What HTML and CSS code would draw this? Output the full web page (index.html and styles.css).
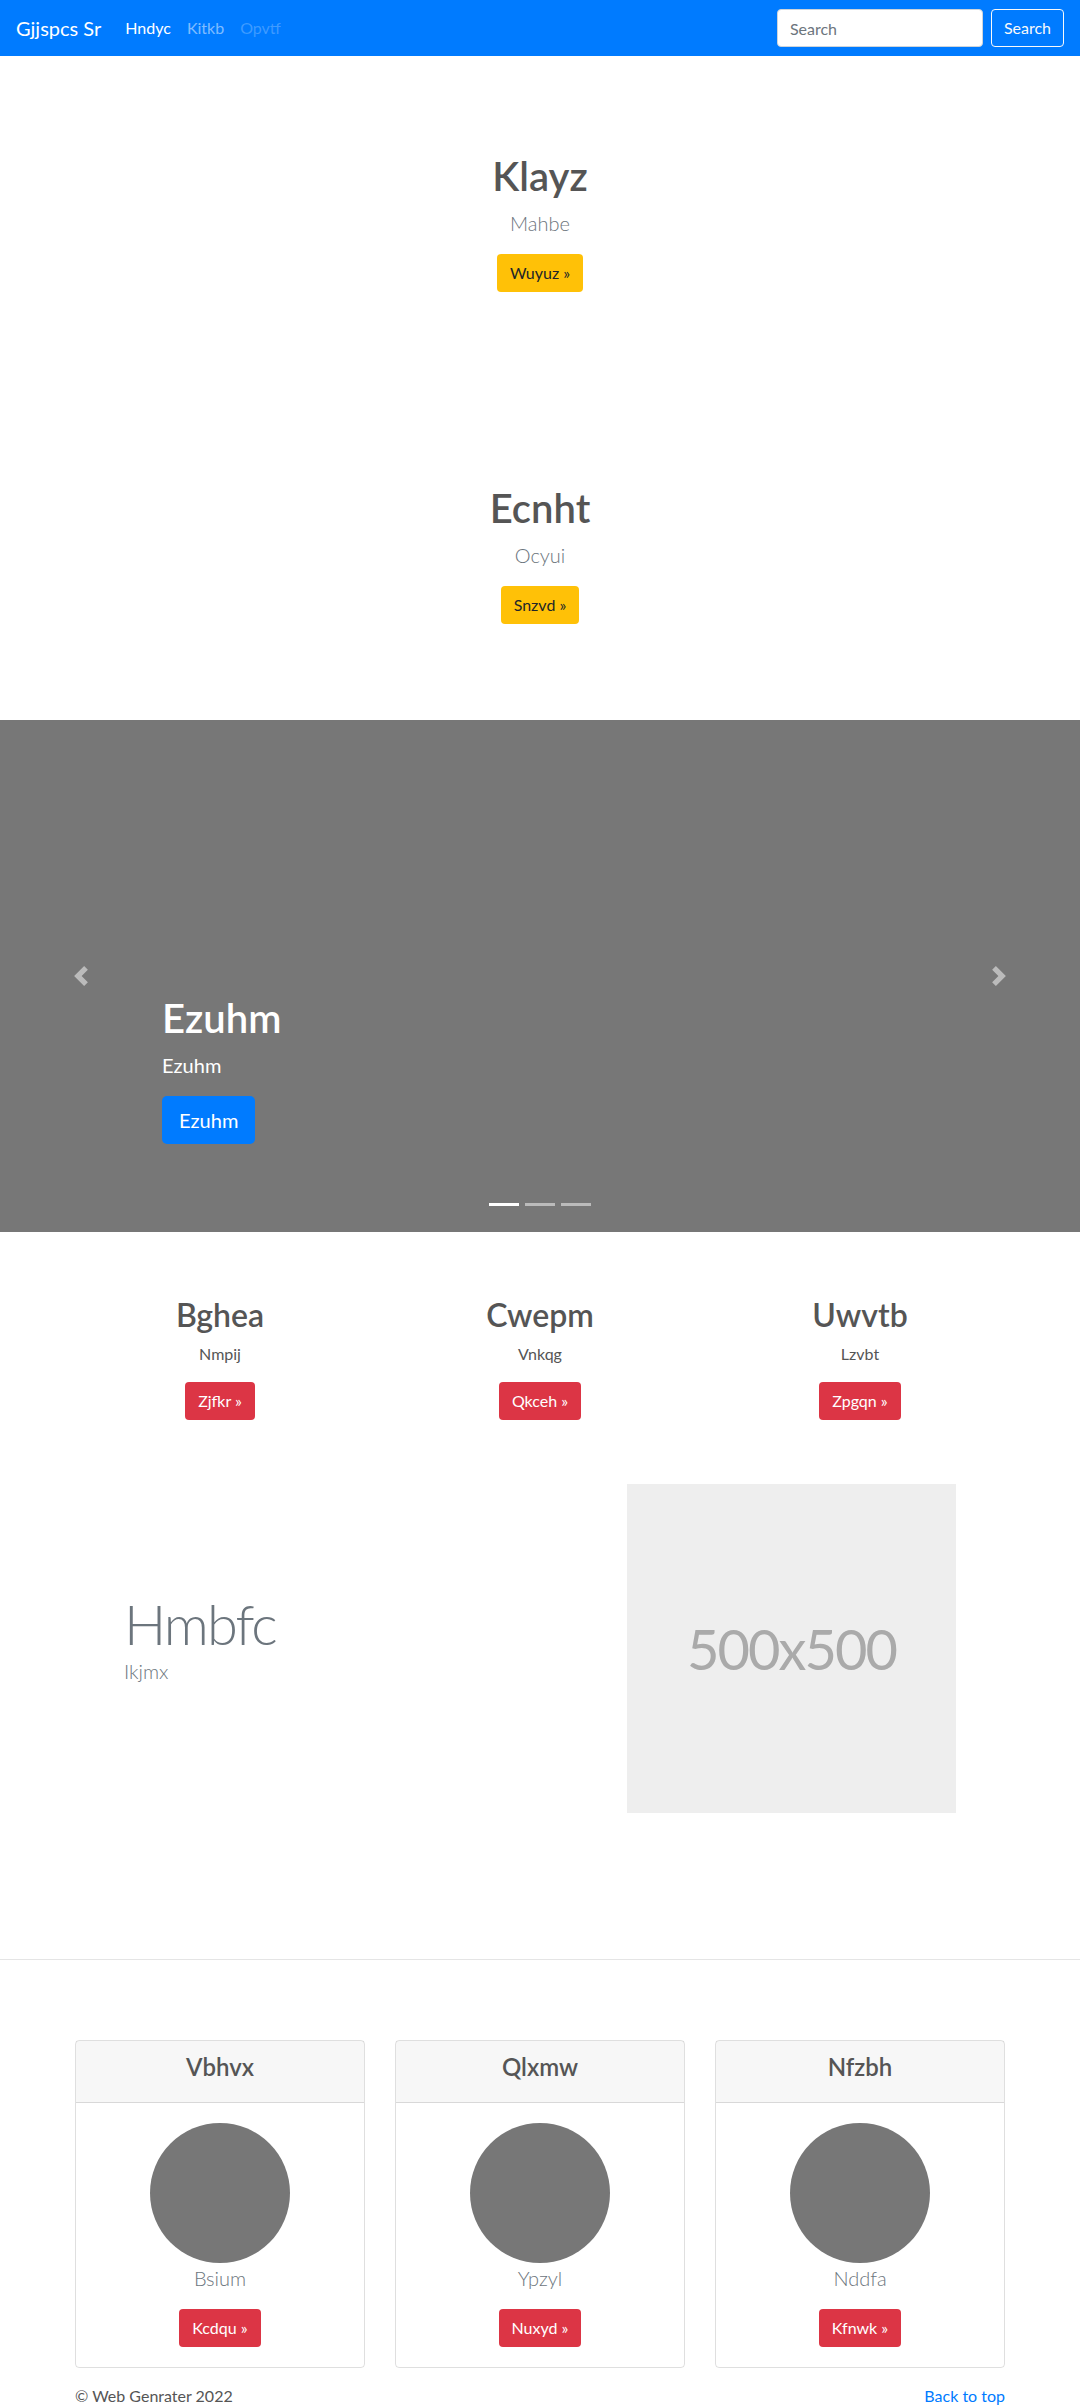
FILE: index.html
```html
<!DOCTYPE html>
<html lang="en">
<head>
    <meta charset="UTF-8">
    <meta name="viewport" content="width=device-width, initial-scale=1.0">
    <title>Gjjspcs Sr</title>
    <link rel="stylesheet" href="styles.css">
</head>
<body>
    <nav class="navbar">
        <a class="brand" href="#">Gjjspcs Sr</a>
        <ul class="nav-links">
            <li><a class="active" href="#">Hndyc</a></li>
            <li><a href="#">Kitkb</a></li>
            <li><a class="disabled" href="#">Opvtf</a></li>
        </ul>
        <form class="search">
            <input type="text" placeholder="Search">
            <button type="button">Search</button>
        </form>
    </nav>

    <section class="hero">
        <h1>Klayz</h1>
        <p class="lead">Mahbe</p>
        <a class="btn btn-warning" href="#">Wuyuz &raquo;</a>
    </section>

    <section class="hero">
        <h1>Ecnht</h1>
        <p class="lead">Ocyui</p>
        <a class="btn btn-warning" href="#">Snzvd &raquo;</a>
    </section>

    <div class="carousel">
        <a class="control prev" href="#">
            <svg width="20" height="20" viewBox="0 0 8 8"><path fill="#fff" d="M5.25 0l-4 4 4 4 1.5-1.5L4.25 4l2.5-2.5L5.25 0z"/></svg>
        </a>
        <div class="caption">
            <h1>Ezuhm</h1>
            <p>Ezuhm</p>
            <p><a class="btn btn-lg btn-primary" href="#">Ezuhm</a></p>
        </div>
        <a class="control next" href="#">
            <svg width="20" height="20" viewBox="0 0 8 8"><path fill="#fff" d="M2.75 0l-1.5 1.5L3.75 4l-2.5 2.5L2.75 8l4-4-4-4z"/></svg>
        </a>
        <ol class="indicators">
            <li class="active"></li>
            <li></li>
            <li></li>
        </ol>
    </div>

    <div class="container">
        <div class="marketing">
            <div class="col">
                <h2>Bghea</h2>
                <p>Nmpij</p>
                <p><a class="btn btn-danger" href="#">Zjfkr &raquo;</a></p>
            </div>
            <div class="col">
                <h2>Cwepm</h2>
                <p>Vnkqg</p>
                <p><a class="btn btn-danger" href="#">Qkceh &raquo;</a></p>
            </div>
            <div class="col">
                <h2>Uwvtb</h2>
                <p>Lzvbt</p>
                <p><a class="btn btn-danger" href="#">Zpgqn &raquo;</a></p>
            </div>
        </div>

        <div class="featurette">
            <div class="feature-text">
                <h2>Hmbfc</h2>
                <p class="lead">Ikjmx</p>
            </div>
            <div class="placeholder">500x500</div>
        </div>
    </div>

    <hr class="divider">

    <div class="container">
        <div class="cards">
            <div class="col">
                <div class="card">
                    <div class="card-header"><h4>Vbhvx</h4></div>
                    <div class="card-body">
                        <div class="avatar"></div>
                        <p class="lead">Bsium</p>
                        <a class="btn btn-danger" href="#">Kcdqu &raquo;</a>
                    </div>
                </div>
            </div>
            <div class="col">
                <div class="card">
                    <div class="card-header"><h4>Qlxmw</h4></div>
                    <div class="card-body">
                        <div class="avatar"></div>
                        <p class="lead">Ypzyl</p>
                        <a class="btn btn-danger" href="#">Nuxyd &raquo;</a>
                    </div>
                </div>
            </div>
            <div class="col">
                <div class="card">
                    <div class="card-header"><h4>Nfzbh</h4></div>
                    <div class="card-body">
                        <div class="avatar"></div>
                        <p class="lead">Nddfa</p>
                        <a class="btn btn-danger" href="#">Kfnwk &raquo;</a>
                    </div>
                </div>
            </div>
        </div>

        <footer class="footer">
            <p>&copy; Web Genrater 2022</p>
            <p><a href="#">Back to top</a></p>
        </footer>
    </div>
</body>
</html>
```

FILE: styles.css
```css
body {
    margin: 0;
    font-family: Lato, "Open Sans", sans-serif;
    font-size: 16px;
    line-height: 1.5;
    color: #555;
    background: #fff;
}
a {
    text-decoration: none;
    color: #007bff;
}
h1, h2, h4 {
    margin: 0 0 8px;
    font-weight: 600;
    line-height: 1.2;
}
p {
    margin: 0 0 16px;
}
.lead {
    font-size: 20px;
    font-weight: 300;
    color: #6c757d;
}

/* navbar */
.navbar {
    display: flex;
    align-items: center;
    padding: 8px 16px;
    background: #007bff;
}
.brand {
    font-size: 20px;
    line-height: 30px;
    padding: 5px 0;
    margin-right: 16px;
    color: #fff;
}
.nav-links {
    display: flex;
    list-style: none;
    margin: 0;
    padding: 0;
}
.nav-links a {
    display: block;
    padding: 8px;
    color: rgba(255, 255, 255, 0.5);
}
.nav-links a.active {
    color: #fff;
}
.nav-links a.disabled {
    color: rgba(255, 255, 255, 0.25);
}
.search {
    display: flex;
    margin-left: auto;
}
.search input {
    width: 206px;
    height: 38px;
    box-sizing: border-box;
    padding: 6px 12px;
    margin-right: 8px;
    font: inherit;
    color: #495057;
    border: 1px solid #ced4da;
    border-radius: 4px;
}
.search input::placeholder {
    color: #6c757d;
}
.search button {
    height: 38px;
    padding: 6px 12px;
    font: inherit;
    color: #f8f9fa;
    background: transparent;
    border: 1px solid #f8f9fa;
    border-radius: 4px;
}

/* buttons */
.btn {
    display: inline-block;
    padding: 6px 12px;
    font-size: 16px;
    line-height: 24px;
    border: 1px solid transparent;
    border-radius: 4px;
}
.btn-lg {
    padding: 8px 16px;
    font-size: 20px;
    line-height: 30px;
    border-radius: 5px;
}
.btn-warning {
    background: #ffc107;
    color: #212529;
}
.btn-primary {
    background: #007bff;
    color: #fff;
}
.btn-danger {
    background: #dc3545;
    color: #fff;
}

/* hero sections */
.hero {
    padding: 96px 0;
    text-align: center;
}
.hero h1 {
    font-size: 40px;
}

/* carousel */
.carousel {
    position: relative;
    height: 512px;
    margin-bottom: 64px;
    background: #777;
}
.caption {
    position: absolute;
    left: 15%;
    right: 15%;
    bottom: 52px;
    padding: 20px 0;
    color: #fff;
}
.caption h1 {
    font-size: 40px;
}
.caption p {
    font-size: 20px;
}
.caption p:last-child {
    margin-bottom: 16px;
}
.control {
    position: absolute;
    top: 0;
    bottom: 0;
    width: 15%;
    display: flex;
    align-items: center;
    justify-content: center;
    opacity: 0.5;
}
.control.prev {
    left: 0;
}
.control.next {
    right: 0;
}
.indicators {
    position: absolute;
    left: 0;
    right: 0;
    bottom: 0;
    display: flex;
    justify-content: center;
    list-style: none;
    margin: 0 15% 16px;
    padding: 0;
}
.indicators li {
    width: 30px;
    height: 3px;
    margin: 0 3px;
    border-top: 10px solid transparent;
    border-bottom: 10px solid transparent;
    background: #fff;
    background-clip: padding-box;
    opacity: 0.5;
}
.indicators li.active {
    opacity: 1;
}

/* content */
.container {
    width: 960px;
    margin: 0 auto;
}
.marketing {
    display: grid;
    grid-template-columns: repeat(3, 1fr);
    text-align: center;
}
.marketing h2 {
    font-size: 32px;
}
.featurette {
    display: grid;
    grid-template-columns: 1fr 329px;
    align-items: center;
    padding: 0 64px 66px;
    margin-top: 48px;
}
.feature-text h2 {
    margin-bottom: 4px;
    font-size: 56px;
    font-weight: 300;
    line-height: 1;
    letter-spacing: -2px;
    color: #6c757d;
}
.placeholder {
    height: 329px;
    display: flex;
    align-items: center;
    justify-content: center;
    background: #eee;
    color: #aaa;
    font-size: 56px;
    letter-spacing: -2px;
}
.divider {
    margin: 80px 0;
    border: 0;
    border-top: 1px solid rgba(0, 0, 0, 0.1);
}

/* cards */
.cards {
    display: grid;
    grid-template-columns: repeat(3, 1fr);
}
.cards .col {
    padding: 0 15px;
}
.card {
    border: 1px solid rgba(0, 0, 0, 0.125);
    border-radius: 4px;
    text-align: center;
}
.card-header {
    padding: 12px 20px;
    background: rgba(0, 0, 0, 0.03);
    border-bottom: 1px solid rgba(0, 0, 0, 0.125);
}
.card-header h4 {
    font-size: 24px;
}
.card-body {
    padding: 20px;
}
.avatar {
    width: 140px;
    height: 140px;
    margin: 0 auto;
    border-radius: 50%;
    background: #777;
}

.footer {
    display: flex;
    justify-content: space-between;
    padding: 16px 15px 0;
}
```
